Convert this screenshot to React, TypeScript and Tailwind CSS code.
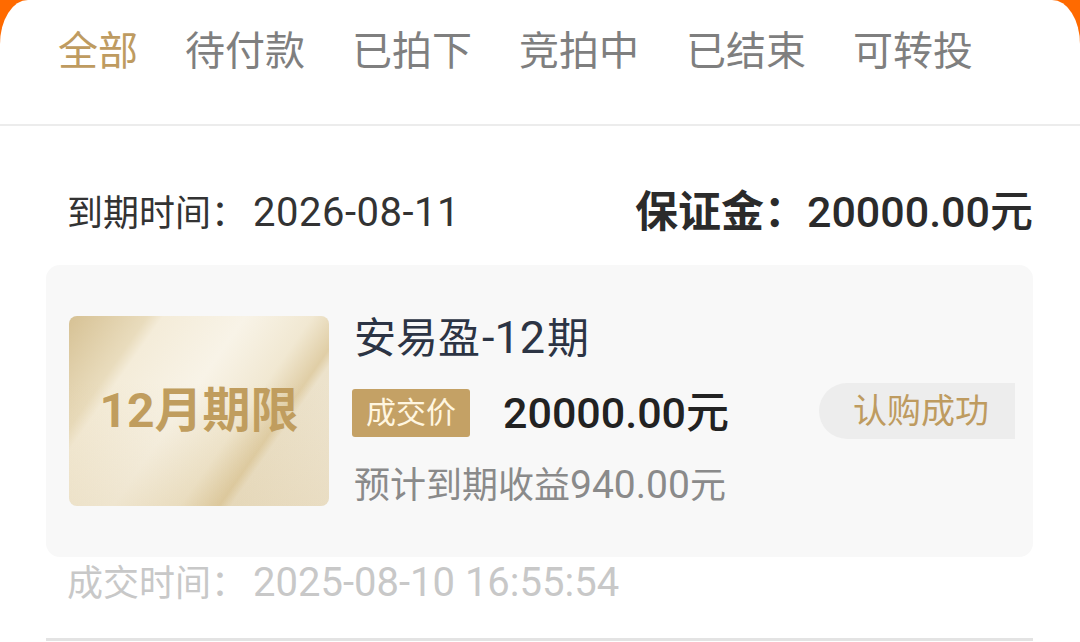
const tabs = ["全部", "待付款", "已拍下", "竞拍中", "已结束", "可转投"];

export default function App() {
  return (
    <div className="h-[642px] w-[1080px] overflow-hidden bg-[#ff6a00] font-['Roboto','Noto_Sans_CJK_SC',sans-serif]">
      <div className="h-full rounded-t-[28px_44px] bg-white">
        {/* Tabs */}
        <div className="flex h-[124px] items-center gap-[47px] pb-[20px] pl-[58px]">
          {tabs.map((t, i) => (
            <span
              key={t}
              className={`text-[40px] leading-none ${i === 0 ? "text-[#be9b60]" : "text-[#7f7f7f]"}`}
            >
              {t}
            </span>
          ))}
        </div>
        <div className="h-[2px] bg-[#ececec]" />

        <div className="pl-[46px] pr-[47px]">
          {/* Header row */}
          <div className="flex h-[139px] items-center justify-between pl-[21px] pt-[34px]">
            <div className="flex items-baseline text-[36px] leading-none text-[#333]">
              到期时间：<span className="ml-[6px] text-[40px] tracking-[0.5px]">2026-08-11</span>
            </div>
            <div className="text-[43px] font-medium leading-none text-[#2b2b2b]">
              <span className="font-semibold">保证金：</span>20000.00元
            </div>
          </div>

          {/* Card */}
          <div className="flex h-[292px] items-center rounded-[14px] bg-[#f8f8f8] pl-[23px] pr-[18px]">
            <div className="flex h-[190px] w-[260px] shrink-0 items-center justify-center rounded-[8px] bg-[linear-gradient(180deg,rgba(255,255,255,0)_35%,rgba(205,178,120,0.22)_100%),linear-gradient(125deg,#d6c194_0%,#e9dcbd_20%,#f4ecd9_24%,#f8f3e7_45%,#f1e8d2_62%,#e0cea6_72%,#ece2cb_75%,#f1e9d8_100%)]">
              <span className="text-[48px] font-bold leading-none text-[#c09d5e]">12月期限</span>
            </div>
            <div className="ml-[23px] flex h-[190px] flex-col justify-between">
              <div className="pl-[2px] text-[42px] leading-[44px] text-[#2c3444]">
                安易盈<span className="mx-[2px] text-[45px]">-12</span>期
              </div>
              <div className="flex h-[48px] items-center">
                <span className="flex h-[48px] w-[118px] items-center justify-center rounded-[3px] bg-[#c4a165] text-[30px] leading-none text-[#fff6e0]">
                  成交价
                </span>
                <span className="ml-[33px] text-[43px] font-medium leading-none text-[#222]">20000.00元</span>
              </div>
              <div className="pl-[2px] text-[36px] leading-[40px] text-[#8a8a8a]">
                预计到期收益<span className="text-[39px]">940.00</span>元
              </div>
            </div>
            <div className="ml-auto flex h-[56px] w-[196px] items-center justify-center rounded-l-full bg-[#ededed] pl-[8px] text-[34px] leading-none text-[#be9b60]">
              认购成功
            </div>
          </div>

          {/* Deal time */}
          <div className="mt-[6px] pl-[21px] text-[36px] leading-[40px] text-[#c8c8c8]">
            成交时间：<span className="ml-[6px] text-[40px]">2025-08-10 16:55:54</span>
          </div>
          <div className="mt-[34px] h-[3px] bg-[#e3e3e3]" />
        </div>
      </div>
    </div>
  );
}
